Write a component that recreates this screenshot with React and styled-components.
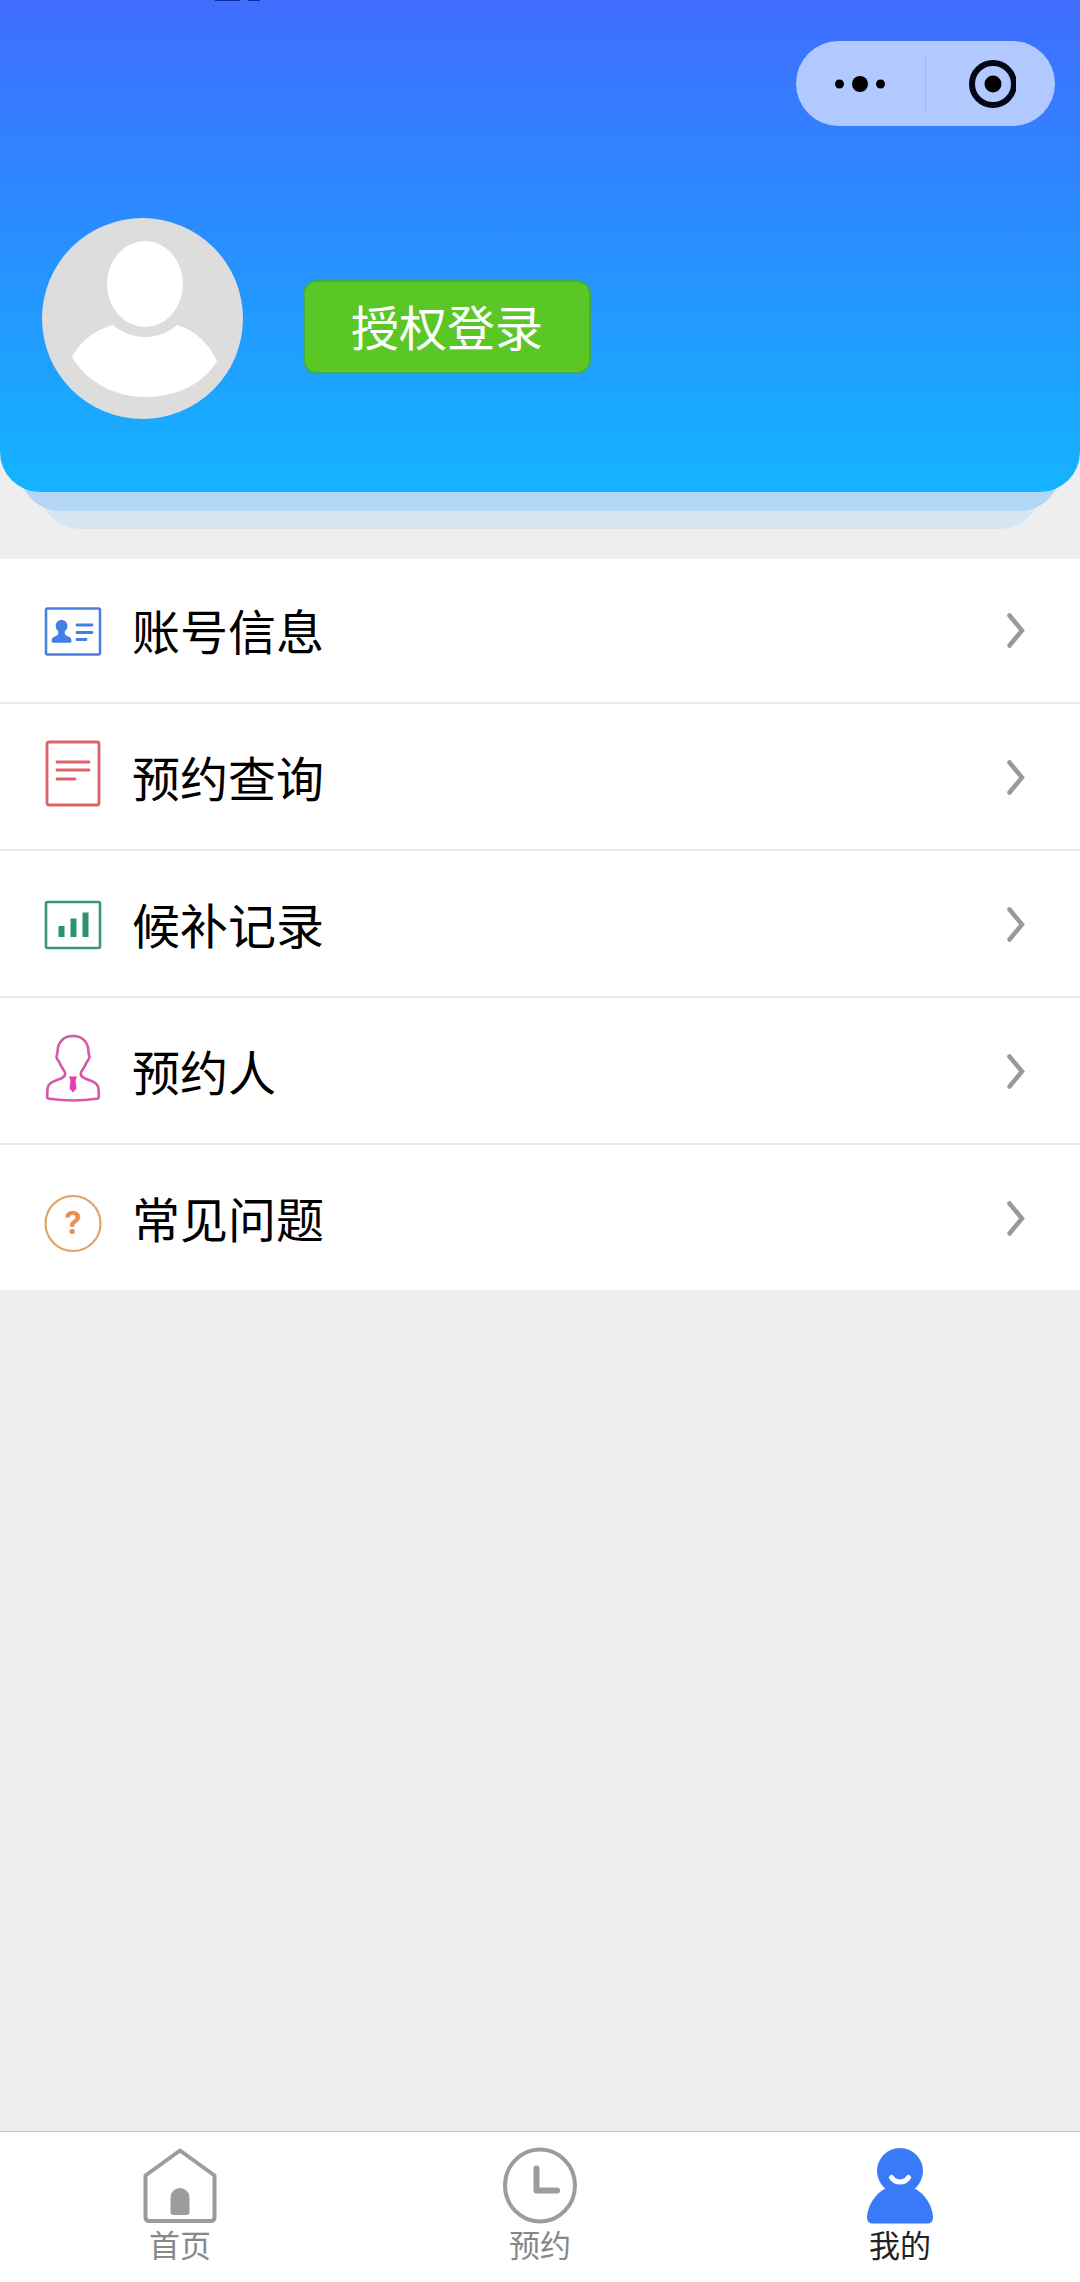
import React from "react";
import styled, { createGlobalStyle } from "styled-components";

const GlobalStyle = createGlobalStyle`
  *, *::before, *::after { box-sizing: border-box; }
  body {
    margin: 0;
    background: #eeeeee;
    font-family: "Noto Sans CJK SC", "Noto Sans", sans-serif;
    color: #000;
  }
`;

const Page = styled.div`
  display: flex;
  flex-direction: column;
  min-height: 100vh;
  background: #eeeeee;
`;

const Header = styled.header`
  position: relative;
  isolation: isolate;
  display: flex;
  flex-direction: column;
  margin-bottom: 67px;
`;

const HeaderPanel = styled.div`
  display: flex;
  flex-direction: column;
  gap: 92px;
  padding: 41px 25px 73px 42px;
  border-radius: 0 0 40px 40px;
  background: linear-gradient(180deg, #406dff 0%, #2b8aff 43%, #14b4ff 100%);
`;

const Layer = styled.div`
  position: absolute;
  z-index: -1;
  left: ${(p) => p.$inset}px;
  right: ${(p) => p.$inset}px;
  bottom: -${(p) => p.$drop}px;
  height: 80px;
  border-radius: 0 0 40px 40px;
  background: ${(p) => p.$color};
`;

const StatusRemnant = styled.div`
  position: absolute;
  top: 0;
  left: 215px;
  display: flex;
  gap: 8px;

  &::before,
  &::after {
    content: "";
    height: 1px;
    background: #0a2f9c;
  }
  &::before { width: 25px; }
  &::after { width: 12px; }
`;

const Capsule = styled.div`
  display: flex;
  align-items: center;
  align-self: flex-end;
  width: 259px;
  height: 85px;
  border-radius: 43px;
  background: #b1c9ff;
`;

const CapsuleButton = styled.button`
  display: flex;
  flex: 1;
  align-items: center;
  justify-content: center;
  height: 100%;
  padding: 0;
  border: 0;
  background: none;
  cursor: pointer;
`;

const CapsuleDivider = styled.span`
  width: 1px;
  height: 54px;
  background: #9db5ea;
`;

const Profile = styled.div`
  display: flex;
  align-items: center;
  gap: 60px;
`;

const Avatar = styled.svg`
  display: block;
  width: 201px;
  height: 201px;
`;

const LoginButton = styled.button`
  margin-top: 16px;
  padding: 0 46px 4px;
  height: 94px;
  border: 2px solid #3fae4a;
  border-radius: 14px;
  background: #5bc726;
  color: #fff;
  font: inherit;
  font-size: 48px;
  line-height: 86px;
  cursor: pointer;
`;

const Menu = styled.nav`
  display: flex;
  flex-direction: column;
  background: #fff;
`;

const MenuRow = styled.a`
  display: flex;
  align-items: center;
  height: 147px;
  padding: 4px 52px 0 44px;
  border-bottom: 2px solid #e9e9e9;
  color: #000;
  text-decoration: none;

  &:first-child {
    height: 145px;
    padding-top: 2px;
  }
  &:last-child {
    height: 145px;
    border-bottom: 0;
  }
`;

const MenuIcon = styled.svg`
  width: 58px;
  height: 80px;
  margin-right: 30px;
  overflow: visible;
`;

const MenuLabel = styled.span`
  flex: 1;
  padding-bottom: 6px;
  font-size: 48px;
  line-height: 64px;
`;

const Chevron = styled.svg`
  width: 34px;
  height: 40px;
  margin-bottom: 4px;
`;

const Content = styled.main`
  flex: 1;
`;

const TabBar = styled.nav`
  display: grid;
  grid-template-columns: repeat(3, 1fr);
  border-top: 1px solid #c6c6c6;
  background: #fff;
`;

const Tab = styled.a`
  display: flex;
  flex-direction: column;
  align-items: center;
  gap: 1px;
  padding: 15px 0 20px;
  color: ${(p) => (p.$active ? "#222" : "#888")};
  font-size: 31px;
  line-height: 36px;
  text-decoration: none;
`;

const TabIcon = styled.svg`
  width: 76px;
  height: 78px;
`;

const icons = {
  account: (
    <>
      <rect x="2" y="16.500" width="54" height="46" rx="1.500" fill="none" stroke="#4a7fdc" strokeWidth="2.600" />
      <path d="M17.500 28c-3.600 0-5.800 2.700-5.800 6 0 2.300 1 4.200 2.600 5.300.5 2.700-.5 4-3 5-2.700 1-3.700 2.300-3.600 5 0 1 1 1.500 2.500 1.500h15c1.500 0 2.300-.5 2.300-1.500 0-2.700-1-4-3.700-5-2.500-1-3.500-2.300-3-5 1.600-1.100 2.600-3 2.600-5.300 0-3.300-2.300-6-5.900-6z" fill="#447fe6" />
      <path d="M33 33h15M33 40.500h15M33 47.500h9" stroke="#447fe6" strokeWidth="2.800" strokeLinecap="round" />
    </>
  ),
  query: (
    <>
      <rect x="3" y="3" width="52" height="63" rx="2" fill="none" stroke="#dc6468" strokeWidth="2.800" />
      <path d="M13 23h32M13 31h32M13 40h18" stroke="#dc6468" strokeWidth="2.800" strokeLinecap="round" />
    </>
  ),
  record: (
    <>
      <rect x="2" y="16" width="54" height="46" rx="1.500" fill="none" stroke="#3b9678" strokeWidth="2.600" />
      <path d="M14.500 40h6v11h-6zM26.500 32.500h6v18.500h-6zM38.500 26.500h6V51h-6z" fill="#2c9270" />
    </>
  ),
  person: (
    <>
      <path
        d="M29 3C19 3 13.500 10 13.500 19c0 2-.8 3-1 5 .2 2.500 2 3.500 3 5.500 1.300 4 4.500 7.500 5.500 10 .8 3-.5 4.500-4 6-5 2-10.500 3-12.500 7C3 55 3.200 60 3.200 64c0 1 .8 1.500 2.300 1.700 15 2.300 32 2.300 47 0 1.500-.2 2.300-.7 2.300-1.700 0-4 .2-9-1.300-11.500-2-4-7.500-5-12.500-7-3.500-1.500-4.800-3-4-6 1-2.500 4.200-6 5.500-10 1-2 2.800-3 3-5.500-.2-2-1-3-1-5C44.500 10 39 3 29 3z"
        fill="none"
        stroke="#d559a8"
        strokeWidth="2.600"
        strokeLinejoin="round"
      />
      <path d="M25 43.500h8l-1.500 4 1 8-3.500 4-3.500-4 1-8z" fill="#e43fae" />
    </>
  ),
  question: (
    <>
      <circle cx="29" cy="43.500" r="27.500" fill="none" stroke="#dfa566" strokeWidth="2.200" />
      <text x="29" y="54" textAnchor="middle" fontFamily="Inter, sans-serif" fontWeight="700" fontSize="31" fill="#e9904f">
        ?
      </text>
    </>
  ),
};

const menuItems = [
  { id: "account", label: "账号信息" },
  { id: "query", label: "预约查询" },
  { id: "record", label: "候补记录" },
  { id: "person", label: "预约人" },
  { id: "question", label: "常见问题" },
];

const tabs = [
  {
    id: "home",
    label: "首页",
    icon: (
      <>
        <path d="M38 3.500 3.500 28.500V70q0 4 4 4h61q4 0 4-4V28.500z" fill="none" stroke="#9c9c9c" strokeWidth="4" strokeLinejoin="round" />
        <path d="M28.500 65V50.500a9.500 9.500 0 0 1 19 0V65q0 3-3 3h-13q-3 0-3-3z" fill="#9c9c9c" />
      </>
    ),
  },
  {
    id: "booking",
    label: "预约",
    icon: (
      <>
        <ellipse cx="38" cy="38.500" rx="35" ry="36" fill="none" stroke="#9c9c9c" strokeWidth="4" />
        <path d="M34.500 21.500v22H55" fill="none" stroke="#9c9c9c" strokeWidth="6" strokeLinecap="round" strokeLinejoin="round" />
      </>
    ),
  },
  {
    id: "mine",
    label: "我的",
    active: true,
    icon: (
      <>
        <circle cx="38" cy="24" r="23" fill="#397af8" />
        <path d="M24 41h28c11 6 18 17 19 28.500 0 5-2 7-6 7H11c-4 0-6-2-6-7C6 58 13 47 24 41z" fill="#397af8" />
        <path d="M29.500 30.500c4 6 13 6 17 0" fill="none" stroke="#fff" strokeWidth="5" strokeLinecap="round" />
      </>
    ),
  },
];

export default function App() {
  return (
    <Page>
      <GlobalStyle />
      <Header>
        <Layer $inset={40} $drop={37} $color="#d6e5ef" />
        <Layer $inset={20} $drop={19} $color="#b2d6f3" />
        <HeaderPanel>
          <StatusRemnant />
          <Capsule>
            <CapsuleButton type="button" aria-label="更多">
              <svg width="54" height="20" viewBox="0 0 54 20" aria-hidden="true">
                <circle cx="5.500" cy="10" r="4.500" />
                <circle cx="26" cy="10" r="8" />
                <circle cx="46.500" cy="10" r="4.500" />
              </svg>
            </CapsuleButton>
            <CapsuleDivider />
            <CapsuleButton type="button" aria-label="关闭">
              <svg width="50" height="50" viewBox="0 0 50 50" aria-hidden="true">
                <circle cx="27" cy="25" r="21" fill="none" stroke="#000614" strokeWidth="6" />
                <circle cx="27" cy="25" r="8.500" />
              </svg>
            </CapsuleButton>
          </Capsule>
          <Profile>
            <Avatar viewBox="0 0 201 201" aria-hidden="true">
              <circle cx="100.500" cy="100.500" r="100.500" fill="#dddddd" />
              <ellipse cx="103" cy="66" rx="38" ry="43" fill="#fff" />
              <path d="M71 107C52 112 38 124 30 139c14 24 42 40 73 40 30 0 58-12 72-36-8-17-22-31-40-36-18 16-46 16-64 0z" fill="#fff" />
            </Avatar>
            <LoginButton type="button">授权登录</LoginButton>
          </Profile>
        </HeaderPanel>
      </Header>
      <Content>
        <Menu>
          {menuItems.map((item) => (
            <MenuRow key={item.id} href={`#${item.id}`}>
              <MenuIcon viewBox="0 0 58 80" aria-hidden="true">{icons[item.id]}</MenuIcon>
              <MenuLabel>{item.label}</MenuLabel>
              <Chevron viewBox="0 0 34 40" aria-hidden="true">
                <path d="M15.500 5.500 28 20.500 15.500 35.500" fill="none" stroke="#999" strokeWidth="4.500" strokeLinecap="round" />
              </Chevron>
            </MenuRow>
          ))}
        </Menu>
      </Content>
      <TabBar>
        {tabs.map((tab) => (
          <Tab key={tab.id} href={`#${tab.id}`} $active={tab.active} aria-current={tab.active ? "page" : undefined}>
            <TabIcon viewBox="0 0 76 78" aria-hidden="true">{tab.icon}</TabIcon>
            {tab.label}
          </Tab>
        ))}
      </TabBar>
    </Page>
  );
}
